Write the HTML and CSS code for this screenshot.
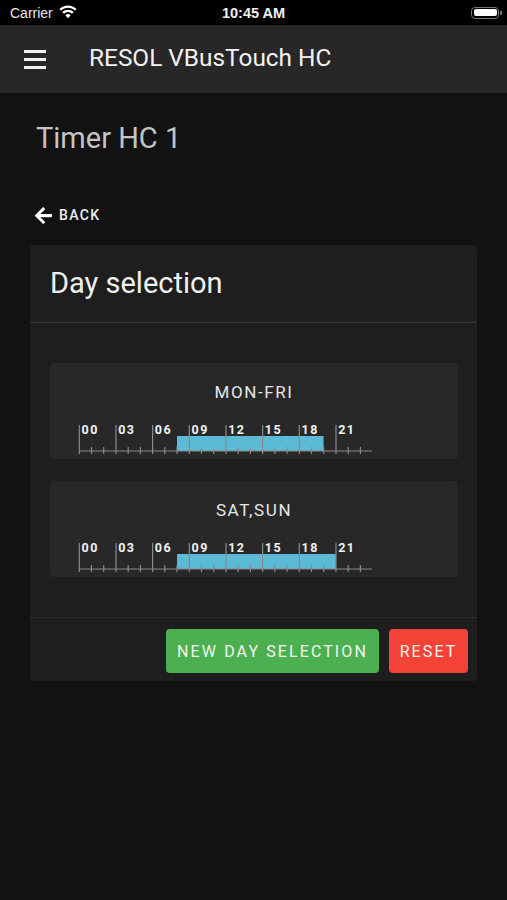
FILE: index.html
```html
<!DOCTYPE html>
<html>
<head>
<meta charset="utf-8">
<link rel="stylesheet" href="styles.css">
</head>
<body>
<div class="status">
  <div class="carrier">Carrier
    <svg class="wifi" width="18" height="14" viewBox="0 0 18 14"><path d="M9 13.2l-2.7-2.9a3.8 3.8 0 0 1 5.4 0z" fill="#fff"/><path d="M4.1 7.9a6.9 6.9 0 0 1 9.8 0" stroke="#fff" stroke-width="2.3" fill="none"/><path d="M1.2 4.8a11 11 0 0 1 15.6 0" stroke="#fff" stroke-width="2.3" fill="none"/></svg>
  </div>
  <div class="time">10:45 AM</div>
  <div class="battery"><span class="batt-body"><span class="batt-fill"></span></span><span class="batt-nub"></span></div>
</div>
<header class="appbar">
  <div class="menu"><span></span><span></span><span></span></div>
  <div class="apptitle">RESOL VBusTouch HC</div>
</header>
<main class="content">
  <h1 class="pagetitle">Timer HC 1</h1>
  <div class="back">
    <svg width="17" height="17" viewBox="0 0 448 448"><path d="M257 415l-22 22c-9 9-25 9-34 0L7 244c-9-9-9-25 0-34L201 16c9-9 25-9 34 0l22 22c10 10 9 25 0 35L137 187h287c13 0 24 11 24 24v32c0 13-11 24-24 24H137l120 114c10 9 10 25 0 34z" fill="#fff"/></svg>
    <span>BACK</span>
  </div>
  <section class="card">
    <div class="card-head">Day selection</div>
    <div class="card-body">
      <div class="panel">
        <div class="panel-title">MON-FRI</div>
        <svg class="timeline" width="300" height="34" viewBox="0 0 300 34">
          <rect x="99" y="14" width="146.6" height="15" fill="#5bbad6"/>
          <g stroke="#8a8a8a" stroke-width="1.2">
            <line x1="1" y1="29" x2="294" y2="29"/>
            <line x1="1.3" y1="3" x2="1.3" y2="32"/><line x1="38" y1="3" x2="38" y2="32"/><line x1="74.6" y1="3" x2="74.6" y2="32"/><line x1="111.3" y1="3" x2="111.3" y2="32"/><line x1="148" y1="3" x2="148" y2="32"/><line x1="184.6" y1="3" x2="184.6" y2="32"/><line x1="221.3" y1="3" x2="221.3" y2="32"/><line x1="258" y1="3" x2="258" y2="32"/>
            <line x1="13.5" y1="25" x2="13.5" y2="32"/><line x1="25.7" y1="25" x2="25.7" y2="32"/><line x1="50.2" y1="25" x2="50.2" y2="32"/><line x1="62.4" y1="25" x2="62.4" y2="32"/><line x1="86.8" y1="25" x2="86.8" y2="32"/><line x1="99" y1="25" x2="99" y2="32"/><line x1="123.5" y1="25" x2="123.5" y2="32"/><line x1="135.7" y1="25" x2="135.7" y2="32"/><line x1="160.2" y1="25" x2="160.2" y2="32"/><line x1="172.4" y1="25" x2="172.4" y2="32"/><line x1="196.8" y1="25" x2="196.8" y2="32"/><line x1="209" y1="25" x2="209" y2="32"/><line x1="233.5" y1="25" x2="233.5" y2="32"/><line x1="245.7" y1="25" x2="245.7" y2="32"/><line x1="270.2" y1="25" x2="270.2" y2="32"/><line x1="282.4" y1="25" x2="282.4" y2="32"/>
          </g>
          <g class="tl-labels">
            <text x="3.5" y="11.5">00</text><text x="40.2" y="11.5">03</text><text x="76.8" y="11.5">06</text><text x="113.5" y="11.5">09</text><text x="150.2" y="11.5">12</text><text x="186.8" y="11.5">15</text><text x="223.5" y="11.5">18</text><text x="260.2" y="11.5">21</text>
          </g>
        </svg>
      </div>
      <div class="panel">
        <div class="panel-title">SAT,SUN</div>
        <svg class="timeline" width="300" height="34" viewBox="0 0 300 34">
          <rect x="99" y="14" width="158.8" height="15" fill="#5bbad6"/>
          <g stroke="#8a8a8a" stroke-width="1.2">
            <line x1="1" y1="29" x2="294" y2="29"/>
            <line x1="1.3" y1="3" x2="1.3" y2="32"/><line x1="38" y1="3" x2="38" y2="32"/><line x1="74.6" y1="3" x2="74.6" y2="32"/><line x1="111.3" y1="3" x2="111.3" y2="32"/><line x1="148" y1="3" x2="148" y2="32"/><line x1="184.6" y1="3" x2="184.6" y2="32"/><line x1="221.3" y1="3" x2="221.3" y2="32"/><line x1="258" y1="3" x2="258" y2="32"/>
            <line x1="13.5" y1="25" x2="13.5" y2="32"/><line x1="25.7" y1="25" x2="25.7" y2="32"/><line x1="50.2" y1="25" x2="50.2" y2="32"/><line x1="62.4" y1="25" x2="62.4" y2="32"/><line x1="86.8" y1="25" x2="86.8" y2="32"/><line x1="99" y1="25" x2="99" y2="32"/><line x1="123.5" y1="25" x2="123.5" y2="32"/><line x1="135.7" y1="25" x2="135.7" y2="32"/><line x1="160.2" y1="25" x2="160.2" y2="32"/><line x1="172.4" y1="25" x2="172.4" y2="32"/><line x1="196.8" y1="25" x2="196.8" y2="32"/><line x1="209" y1="25" x2="209" y2="32"/><line x1="233.5" y1="25" x2="233.5" y2="32"/><line x1="245.7" y1="25" x2="245.7" y2="32"/><line x1="270.2" y1="25" x2="270.2" y2="32"/><line x1="282.4" y1="25" x2="282.4" y2="32"/>
          </g>
          <g class="tl-labels">
            <text x="3.5" y="11.5">00</text><text x="40.2" y="11.5">03</text><text x="76.8" y="11.5">06</text><text x="113.5" y="11.5">09</text><text x="150.2" y="11.5">12</text><text x="186.8" y="11.5">15</text><text x="223.5" y="11.5">18</text><text x="260.2" y="11.5">21</text>
          </g>
        </svg>
      </div>
    </div>
    <div class="card-foot">
      <button class="btn btn-green">NEW DAY SELECTION</button>
      <button class="btn btn-red">RESET</button>
    </div>
  </section>
</main>
</body>
</html>
```

FILE: styles.css
```css
* { box-sizing: border-box; }
html, body { margin: 0; padding: 0; }
body {
  background: #121212;
  font-family: Roboto, "Noto Sans", sans-serif;
  color: #fff;
  width: 507px;
  height: 900px;
  overflow: hidden;
}
.status {
  height: 25px;
  background: #000;
  display: flex;
  align-items: center;
  justify-content: space-between;
  padding: 0 5px 0 10px;
  position: relative;
  font-family: "Liberation Sans", Arial, sans-serif;
}
.carrier {
  font-size: 14px;
  color: #e8e8e8;
  display: flex;
  align-items: center;
  gap: 6px;
}
.wifi { margin-top: -2px; }
.time {
  position: absolute;
  left: 0; right: 0;
  text-align: center;
  font-size: 14.5px;
  font-weight: bold;
  color: #f0f0f0;
  pointer-events: none;
}
.battery { display: flex; align-items: center; }
.batt-body {
  width: 28px; height: 12px;
  border: 1.5px solid #777;
  border-radius: 4px;
  padding: 1.5px;
  display: flex;
}
.batt-fill { flex: 1; background: #fff; border-radius: 2px; }
.batt-nub { width: 2px; height: 4px; background: #777; border-radius: 0 1px 1px 0; margin-left: 1px; }
.appbar {
  height: 68px;
  background: #272727;
  display: flex;
  align-items: center;
  padding-left: 24px;
}
.menu {
  width: 22px;
  display: flex;
  flex-direction: column;
  gap: 5.5px;
  margin-top: 1px;
}
.menu span { display: block; height: 2.4px; background: #f2f2f2; }
.apptitle {
  margin-left: 43px;
  font-size: 24.4px;
  color: #f2f2f2;
  margin-top: -3px;
}
.content { padding: 0 30px; }
.pagetitle {
  margin: 0;
  padding: 27px 0 0 6px;
  font-size: 29px;
  font-weight: 400;
  color: #c4c4c4;
  line-height: 36px;
}
.back {
  display: flex;
  align-items: center;
  gap: 7px;
  padding-left: 5px;
  margin-top: 49px;
  height: 20px;
}
.back span {
  font-size: 14px;
  letter-spacing: 1.4px;
  font-weight: 500;
  color: #eee;
}
.card {
  margin-top: 20px;
  background: #1e1e1e;
  border-radius: 4px;
}
.card-head {
  height: 78px;
  display: flex;
  align-items: center;
  padding: 0 20px 2px;
  font-size: 29px;
  color: #f0f0f0;
  border-bottom: 1px solid #3a3a3a;
}
.card-body {
  padding: 40px 19px 40px 20px;
  display: flex;
  flex-direction: column;
  gap: 22px;
  border-bottom: 1px solid #2e2e2e;
}
.panel {
  background: #282828;
  border-radius: 4px;
  height: 96px;
  padding-top: 18px;
  display: flex;
  flex-direction: column;
}
.panel-title {
  text-align: center;
  font-size: 17px;
  letter-spacing: 1.6px;
  color: #e6e6e6;
  line-height: 22px;
}
.timeline {
  margin: 19px 0 0 28px;
  display: block;
  overflow: visible;
}
.tl-labels text {
  font-family: Roboto, sans-serif;
  font-size: 12.5px;
  font-weight: 700;
  letter-spacing: 1.5px;
  fill: #f2f2f2;
}
.card-foot {
  display: flex;
  justify-content: flex-end;
  gap: 10px;
  padding: 11px 9px 8px;
}
.btn {
  height: 44px;
  border: 0;
  border-radius: 4px;
  color: #f4f4f4;
  font-family: Roboto, sans-serif;
  font-size: 16px;
  letter-spacing: 2.1px;
  font-weight: 400;
  padding: 0 8px;
}
.btn-green { background: #4caf50; width: 213px; }
.btn-red { background: #f44336; width: 79px; }
```
